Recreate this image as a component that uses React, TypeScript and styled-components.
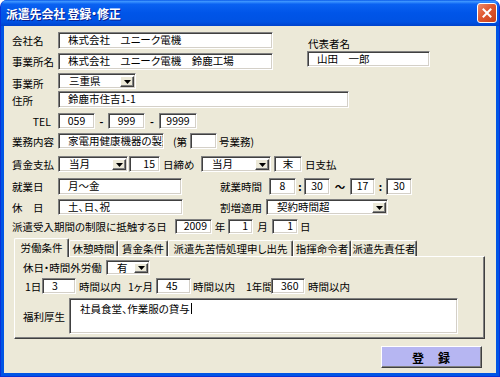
import styled, { createGlobalStyle, css } from "styled-components";

const FONT = `"Noto Sans CJK JP", "Noto Sans CJK SC", sans-serif`;

const GlobalStyle = createGlobalStyle`
  html, body {
    margin: 0;
    padding: 0;
    background: #ffffff;
  }
  body {
    font-family: ${FONT};
    font-size: 10.5px;
    color: #000;
    font-feature-settings: "palt";
  }
  * {
    box-sizing: border-box;
  }
`;

const sunken = css`
  background: #fff;
  border-top: 1px solid #808080;
  border-left: 1px solid #808080;
  border-right: 1px solid #fff;
  border-bottom: 1px solid #fff;
  box-shadow: inset 1px 1px 0 #404040, inset -1px -1px 0 #d4d0c8;
`;

const raised = css`
  border-top: 1px solid #fff;
  border-left: 1px solid #fff;
  border-right: 1px solid #404040;
  border-bottom: 1px solid #404040;
  box-shadow: inset -1px -1px 0 #808080;
`;

const Window = styled.div`
  width: 500px;
  height: 377px;
  display: flex;
  flex-direction: column;
  background: #0055e5;
  border: 1px solid #0831d9;
  border-top: none;
  border-radius: 7px 7px 0 0;
  overflow: hidden;
`;

const TitleBar = styled.div`
  height: 26px;
  flex-shrink: 0;
  display: flex;
  align-items: center;
  justify-content: space-between;
  padding: 0 2px 0 5px;
  background: linear-gradient(
    to bottom,
    #0a5ae8 0%,
    #3d95ff 6%,
    #0a62f2 16%,
    #0055e8 50%,
    #0052e3 84%,
    #0043cc 100%
  );
`;

const Title = styled.span`
  color: #fff;
  font-size: 12px;
  font-weight: bold;
  letter-spacing: -0.2px;
  text-shadow: 1px 1px 0 #0a1e8c;
`;

const CloseButton = styled.div`
  width: 20px;
  height: 20px;
  display: flex;
  align-items: center;
  justify-content: center;
  border: 1px solid #fff;
  border-radius: 3px;
  background: linear-gradient(135deg, #ec8a6c 0%, #e0582f 45%, #c7401b 100%);
`;

const Body = styled.div`
  flex: 1;
  margin: 0 3px 3px;
  padding: 6px 0 0 8px;
  background: #ece9d8;
  display: flex;
  flex-direction: column;
`;

const Row = styled.div<{ $mt?: number; $h: number }>`
  display: flex;
  align-items: center;
  height: ${(p) => p.$h}px;
  margin-top: ${(p) => p.$mt ?? 0}px;
  white-space: nowrap;
`;

const Label = styled.span<{ $w?: number; $right?: boolean }>`
  width: ${(p) => p.$w ?? 46}px;
  flex-shrink: 0;
  text-align: ${(p) => (p.$right ? "right" : "left")};
  padding-right: ${(p) => (p.$right ? 7 : 0)}px;
`;

const Text = styled.span<{ $ml?: number; $w?: number; $center?: boolean }>`
  margin-left: ${(p) => p.$ml ?? 0}px;
  ${(p) => (p.$w ? `width: ${p.$w}px; flex-shrink: 0;` : "")}
  text-align: ${(p) => (p.$center ? "center" : "left")};
`;

const Field = styled.div<{
  $w: number;
  $h?: number;
  $ml?: number;
  $align?: "left" | "center" | "right";
}>`
  ${sunken}
  width: ${(p) => p.$w}px;
  height: ${(p) => (p.$h ? `${p.$h}px` : "100%")};
  margin-left: ${(p) => p.$ml ?? 0}px;
  flex-shrink: 0;
  display: flex;
  align-items: center;
  justify-content: ${(p) =>
    p.$align === "center" ? "center" : p.$align === "right" ? "flex-end" : "flex-start"};
  padding: 0 ${(p) => (p.$align === "right" ? 4 : 0)}px 0
    ${(p) => (!p.$align || p.$align === "left" ? 9 : 0)}px;
  overflow: hidden;
  white-space: nowrap;
  line-height: 1;
`;

const SelectBox = styled.div<{ $w: number; $h?: number; $ml?: number }>`
  ${sunken}
  width: ${(p) => p.$w}px;
  height: ${(p) => (p.$h ? `${p.$h}px` : "100%")};
  margin-left: ${(p) => p.$ml ?? 0}px;
  flex-shrink: 0;
  display: flex;
  align-items: stretch;
  padding: 2px 1px 1px 2px;
`;

const SelectText = styled.span`
  flex: 1;
  display: flex;
  align-items: center;
  padding-left: 8px;
  line-height: 1;
`;

const ArrowButton = styled.span`
  ${raised}
  width: 14px;
  flex-shrink: 0;
  background: #ece9d8;
  display: flex;
  align-items: center;
  justify-content: center;
`;

const Sep = styled.span<{ $w: number }>`
  width: ${(p) => p.$w}px;
  flex-shrink: 0;
  text-align: center;
  font-weight: bold;
`;

const TopSection = styled.div`
  display: flex;
`;

const LeftCol = styled.div`
  display: flex;
  flex-direction: column;
`;

const RepCol = styled.div`
  display: flex;
  flex-direction: column;
  margin-left: 34px;
  padding-top: 5px;
`;

const RepLabel = styled.span`
  height: 14px;
  line-height: 14px;
  padding-left: 1px;
`;

const AddressBlock = styled.div`
  display: flex;
  margin-top: 3px;
`;

const LabelStack = styled.div`
  width: 46px;
  flex-shrink: 0;
  padding-top: 2px;
  line-height: 17px;
  display: flex;
  flex-direction: column;
`;

const AddressFields = styled.div`
  display: flex;
  flex-direction: column;
  gap: 2px;
`;

const TabStrip = styled.div`
  display: flex;
  align-items: flex-end;
  height: 18px;
  margin: 4px 0 0 2px;
  position: relative;
  z-index: 1;
`;

const Tab = styled.div<{ $w: number; $active?: boolean }>`
  width: ${(p) => p.$w}px;
  height: ${(p) => (p.$active ? 19 : 16)}px;
  margin-bottom: ${(p) => (p.$active ? -1 : 0)}px;
  flex-shrink: 0;
  display: flex;
  align-items: center;
  justify-content: center;
  background: #ece9d8;
  border-top: 1px solid #fff;
  border-left: 1px solid #fff;
  border-right: 1px solid #404040;
  box-shadow: inset -1px 0 0 #808080;
  border-radius: 2px 2px 0 0;
  white-space: nowrap;
  padding-bottom: ${(p) => (p.$active ? 2 : 0)}px;
`;

const TabPanel = styled.div`
  width: 471px;
  height: 83px;
  margin-left: 2px;
  background: #ece9d8;
  border-top: 1px solid #fff;
  border-left: 1px solid #fff;
  border-right: 1px solid #404040;
  border-bottom: 1px solid #404040;
  box-shadow: inset -1px -1px 0 #808080;
  padding: 3px 0 0 8px;
  display: flex;
  flex-direction: column;
`;

const TextArea = styled.div`
  ${sunken}
  width: 389px;
  height: 100%;
  padding: 4px 0 0 10px;
  line-height: 12px;
  align-self: stretch;
`;

const Caret = styled.span`
  display: inline-block;
  width: 1px;
  height: 11px;
  margin-left: 1px;
  background: #000;
  vertical-align: -1px;
`;

const SubmitButton = styled.div`
  ${raised}
  width: 101px;
  height: 22px;
  margin: 7px 14px 0 auto;
  background: #b6b6f2;
  display: flex;
  align-items: center;
  justify-content: center;
  font-size: 12px;
  font-weight: bold;
  letter-spacing: 1px;
`;

const DownArrow = () => (
  <svg width="7" height="4" viewBox="0 0 7 4">
    <polygon points="0,0 7,0 3.5,4" fill="#000" />
  </svg>
);

const Select = ({
  w,
  h,
  ml,
  value,
}: {
  w: number;
  h?: number;
  ml?: number;
  value: string;
}) => (
  <SelectBox $w={w} $h={h} $ml={ml}>
    <SelectText>{value}</SelectText>
    <ArrowButton>
      <DownArrow />
    </ArrowButton>
  </SelectBox>
);

const App = () => {
  return (
    <>
      <GlobalStyle />
      <Window>
        <TitleBar>
          <Title>派遣先会社 登録・修正</Title>
          <CloseButton>
            <svg width="10" height="10" viewBox="0 0 10 10">
              <path
                d="M1.5 1.5 L8.5 8.5 M8.5 1.5 L1.5 8.5"
                stroke="#fff"
                strokeWidth="2"
                strokeLinecap="square"
              />
            </svg>
          </CloseButton>
        </TitleBar>
        <Body>
          <TopSection>
            <LeftCol>
              <Row $h={17}>
                <Label>会社名</Label>
                <Field $w={215}>株式会社　ユニーク電機</Field>
              </Row>
              <Row $h={17} $mt={4}>
                <Label>事業所名</Label>
                <Field $w={215}>株式会社　ユニーク電機　鈴鹿工場</Field>
              </Row>
            </LeftCol>
            <RepCol>
              <RepLabel>代表者名</RepLabel>
              <Field $w={123} $h={16}>
                山田　一郎
              </Field>
            </RepCol>
          </TopSection>

          <AddressBlock>
            <LabelStack>
              <span>事業所</span>
              <span>住所</span>
            </LabelStack>
            <AddressFields>
              <Select w={78} h={16} value="三重県" />
              <Field $w={291} $h={17}>
                鈴鹿市住吉1-1
              </Field>
            </AddressFields>
          </AddressBlock>

          <Row $h={16} $mt={4}>
            <Label $right>TEL</Label>
            <Field $w={37} $align="center">059</Field>
            <Sep $w={13}>-</Sep>
            <Field $w={37} $align="center">999</Field>
            <Sep $w={14}>-</Sep>
            <Field $w={38} $align="center">9999</Field>
          </Row>

          <Row $h={16} $mt={4}>
            <Label>業務内容</Label>
            <Field $w={106}>家電用健康機器の製造・販売</Field>
            <Text $ml={9}>(第</Text>
            <Field $w={27} $ml={3} />
            <Text $ml={2}>号業務)</Text>
          </Row>

          <Row $h={16} $mt={7}>
            <Label>賃金支払</Label>
            <Select w={70} value="当月" />
            <Field $w={31} $ml={1} $align="right">15</Field>
            <Text $ml={3} $w={35}>日締め</Text>
            <Select w={70} ml={3} value="当月" />
            <Field $w={28} $ml={3} $align="center">末</Field>
            <Text $ml={3}>日支払</Text>
          </Row>

          <Row $h={17} $mt={6}>
            <Label>就業日</Label>
            <Field $w={124}>月〜金</Field>
            <Text $ml={38} $w={49}>就業時間</Text>
            <Field $w={27} $align="center">8</Field>
            <Sep $w={8}>:</Sep>
            <Field $w={26} $align="center">30</Field>
            <Sep $w={20}>〜</Sep>
            <Field $w={25} $align="center">17</Field>
            <Sep $w={11}>:</Sep>
            <Field $w={26} $align="center">30</Field>
          </Row>

          <Row $h={16} $mt={4}>
            <Label>休　日</Label>
            <Field $w={125}>土、日、祝</Field>
            <Text $ml={37} $w={46}>割増適用</Text>
            <Select w={122} value="契約時間超" />
          </Row>

          <Row $h={15} $mt={4}>
            <Text $w={163}>派遣受入期間の制限に抵触する日</Text>
            <Field $w={37} $align="right">2009</Field>
            <Text $w={16} $center>年</Text>
            <Field $w={25} $align="right">1</Field>
            <Text $w={19} $center>月</Text>
            <Field $w={26} $align="right">1</Field>
            <Text $ml={2}>日</Text>
          </Row>

          <TabStrip>
            <Tab $w={55} $active>労働条件</Tab>
            <Tab $w={49}>休憩時間</Tab>
            <Tab $w={50}>賃金条件</Tab>
            <Tab $w={125}>派遣先苦情処理申し出先</Tab>
            <Tab $w={58}>指揮命令者</Tab>
            <Tab $w={66}>派遣先責任者</Tab>
          </TabStrip>
          <TabPanel>
            <Row $h={15}>
              <Text $w={83}>休日・時間外労働</Text>
              <Select w={44} value="有" />
            </Row>
            <Row $h={16} $mt={3}>
              <Text $ml={2} $w={17}>1日</Text>
              <Field $w={34}>3</Field>
              <Text $ml={3} $w={49}>時間以内</Text>
              <Text $w={28}>1ヶ月</Text>
              <Field $w={35}>45</Field>
              <Text $ml={2} $w={51}>時間以内</Text>
              <Text $ml={2} $w={25}>1年間</Text>
              <Field $w={34}>360</Field>
              <Text $ml={3}>時間以内</Text>
            </Row>
            <Row $h={36} $mt={4}>
              <Text $w={46}>福利厚生</Text>
              <TextArea>
                社員食堂、作業服の貸与
                <Caret />
              </TextArea>
            </Row>
          </TabPanel>
          <SubmitButton>登　録</SubmitButton>
        </Body>
      </Window>
    </>
  );
};

export default App;
